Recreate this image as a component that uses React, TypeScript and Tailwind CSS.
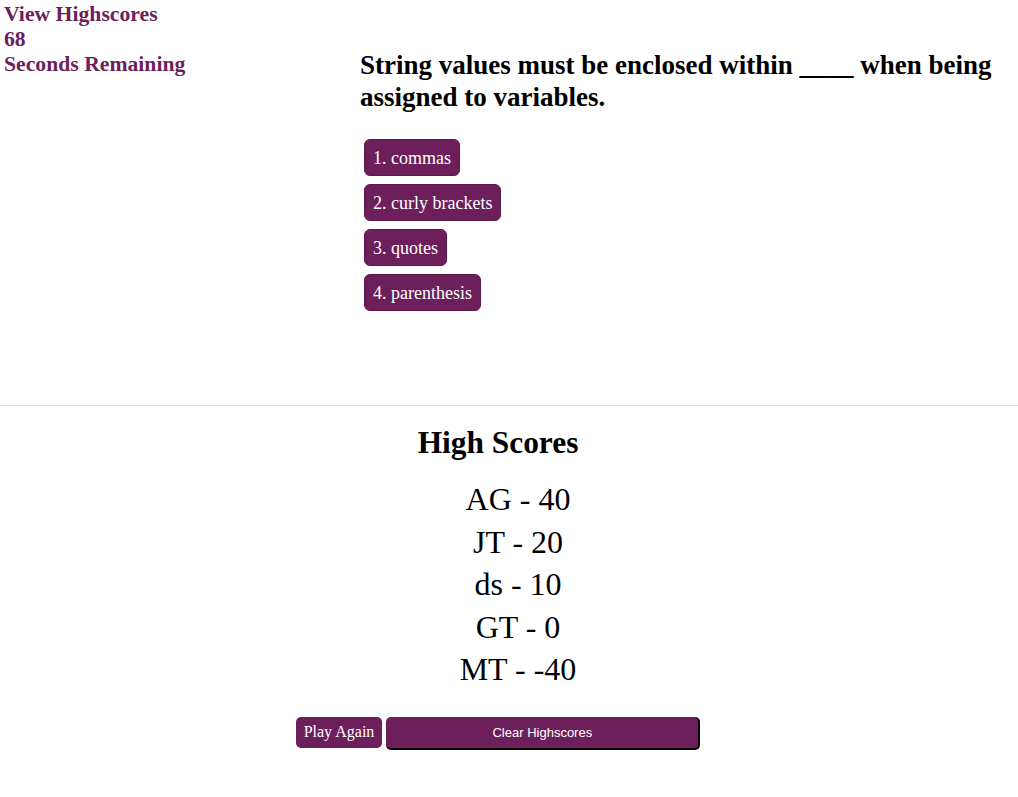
import React from "react";

const purple = "bg-[#6c1f5b]";

export default function App() {
  const answers = ["1. commas", "2. curly brackets", "3. quotes", "4. parenthesis"];
  const scores = ["AG - 40", "JT - 20", "ds - 10", "GT - 0", "MT - -40"];
  return (
    <div className="w-[1018px] h-[797px] bg-white font-['Liberation_Serif',serif] text-black overflow-hidden">
      <div className="flex h-[405px]">
        <div className="w-[360px] shrink-0 pl-[4px] pt-[2px] text-[21.7px] leading-[25px] font-bold text-[#6c1f5b]">
          <div>View Highscores</div>
          <div>68</div>
          <div>Seconds Remaining</div>
        </div>
        <div className="pt-[49px] flex-1 pr-[10px]">
          <h2 className="text-[27px] leading-[32px] font-bold">
            String values must be enclosed within ____ when being assigned to variables.
          </h2>
          <div className="mt-[26px] flex flex-col items-start gap-[8px] pl-[4px]">
            {answers.map((a) => (
              <button
                key={a}
                className={`${purple} text-white text-[18px] leading-[20px] h-[37px] px-[8px] rounded-[6px] border border-[#5a1a4c]`}
              >
                {a}
              </button>
            ))}
          </div>
        </div>
      </div>
      <div className="border-t border-[#dddddd]" />
      <div className="w-[996px] flex flex-col items-center">
        <h2 className="mt-[20px] text-[31.4px] leading-[34px] font-bold">High Scores</h2>
        <ul className="mt-[18px] pl-[40px] text-[32px] leading-[42.6px] text-center">
          {scores.map((s) => (
            <li key={s}>{s}</li>
          ))}
        </ul>
        <div className="mt-[26px] flex gap-[4px] items-start">
          <button className={`${purple} text-white text-[16px] h-[31px] px-[8px] rounded-[5px]`}>
            Play Again
          </button>
          <button
            className={`${purple} text-white text-[13px] font-['Liberation_Sans',sans-serif] h-[33px] w-[314px] rounded-[5px] border-r-2 border-b-2 border-black`}
          >
            Clear Highscores
          </button>
        </div>
      </div>
    </div>
  );
}
